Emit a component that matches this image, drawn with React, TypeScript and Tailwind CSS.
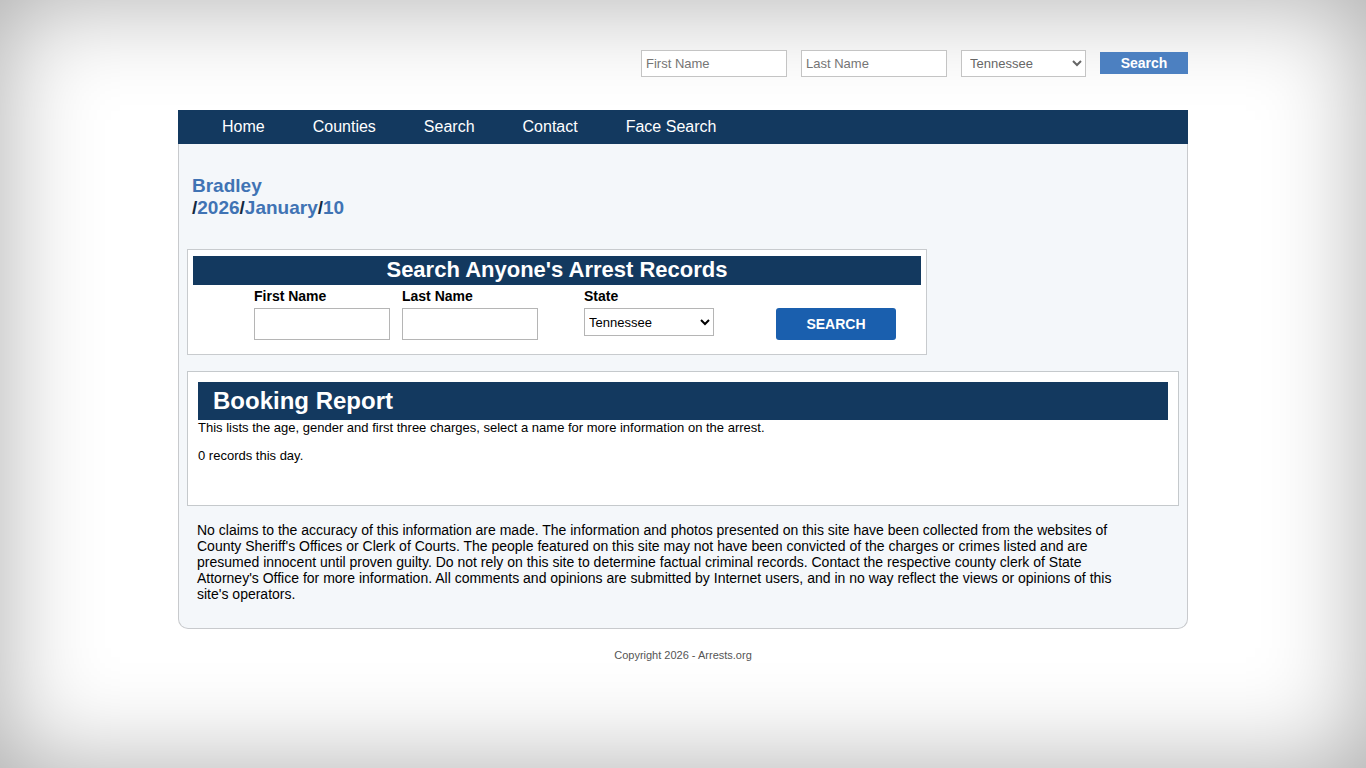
const states = ['Tennessee', 'Texas', 'Utah', 'Vermont', 'Virginia'];
const navItems = ['Home', 'Counties', 'Search', 'Contact', 'Face Search'];

function StateOptions() {
  return (
    <>
      {states.map((state) => (
        <option key={state}>{state}</option>
      ))}
    </>
  );
}

function TopSearch() {
  return (
    <form className="flex flex-wrap items-start justify-end gap-3.5 pt-[50px] text-[13px]" onSubmit={(e) => e.preventDefault()}>
      <input
        type="text"
        aria-label="First Name"
        placeholder="First Name"
        className="h-[27px] w-[146px] border border-[#c4c4c4] bg-white px-1 placeholder:text-[#757575]"
      />
      <input
        type="text"
        aria-label="Last Name"
        placeholder="Last Name"
        className="h-[27px] w-[146px] border border-[#c4c4c4] bg-white px-1 placeholder:text-[#757575]"
      />
      <select aria-label="State" className="h-[27px] w-[125px] border border-[#c4c4c4] bg-white px-1 text-[#666]">
        <StateOptions />
      </select>
      <button type="submit" className="mt-0.5 h-[22px] w-[88px] bg-[#4c80c1] text-sm leading-[22px] font-bold text-white">
        Search
      </button>
    </form>
  );
}

function RecordSearch() {
  return (
    <section className="mt-[30px] max-w-[740px] border border-[#c8cbce] bg-white px-[5px] pt-1.5 pb-3.5">
      <h2 className="bg-[#13395f] pb-0.5 text-center text-[22px] leading-[27px] font-bold text-white">
        Search Anyone's Arrest Records
      </h2>
      <form className="flex items-start pr-[25px] pl-[61px] text-[13px]" onSubmit={(e) => e.preventDefault()}>
        <div className="flex flex-col">
          <label htmlFor="first-name" className="text-sm leading-[23px] font-bold">
            First Name
          </label>
          <input id="first-name" type="text" className="h-8 w-[136px] border border-[#b5b5b5] bg-white px-1" />
        </div>
        <div className="ml-3 flex flex-col">
          <label htmlFor="last-name" className="text-sm leading-[23px] font-bold">
            Last Name
          </label>
          <input id="last-name" type="text" className="h-8 w-[136px] border border-[#b5b5b5] bg-white px-1" />
        </div>
        <div className="ml-[46px] flex flex-col">
          <label htmlFor="state" className="text-sm leading-[23px] font-bold">
            State
          </label>
          <select id="state" className="h-7 w-[130px] border border-[#b5b5b5] bg-white">
            <StateOptions />
          </select>
        </div>
        <button
          type="submit"
          className="mt-[23px] ml-auto h-8 w-[120px] rounded-[3px] bg-[#1a5fae] text-sm font-bold text-white"
        >
          SEARCH
        </button>
      </form>
    </section>
  );
}

export default function App() {
  return (
    <div className="min-h-screen bg-white px-4 font-['Liberation_Sans',Arial,sans-serif] text-black shadow-[inset_0_0_100px_rgba(0,0,0,0.33)]">
      <div className="mx-auto max-w-[1010px]">
        <header>
          <TopSearch />
          <nav className="mt-[33px] flex min-h-[34px] flex-wrap items-center gap-x-12 bg-[#13395f] px-11 text-base text-white">
            {navItems.map((item) => (
              <a key={item} href="#" className="leading-8">
                {item}
              </a>
            ))}
          </nav>
        </header>
        <main className="rounded-b-[10px] border border-t-0 border-[#c8cacd] bg-[#f4f7fa] px-2 pb-[26px]">
          <h1 className="pt-[31px] pl-[5px] text-[19px] leading-[22px] font-bold text-[#13293f]">
            <a href="#" className="text-[#4073b4]">Bradley</a>
            <br />/<a href="#" className="text-[#4073b4]">2026</a>/<a href="#" className="text-[#4073b4]">January</a>/<a href="#" className="text-[#4073b4]">10</a>
          </h1>
          <RecordSearch />
          <section className="mt-4 min-h-[135px] border border-[#c5c9cc] bg-white p-2.5 text-[13px] leading-4">
            <h2 className="bg-[#13395f] px-[15px] text-2xl leading-[38px] font-bold text-white">Booking Report</h2>
            <p>This lists the age, gender and first three charges, select a name for more information on the arrest.</p>
            <p className="mt-3">0 records this day.</p>
          </section>
          <p className="mt-4 pr-12 pl-2.5 text-sm leading-4">
            No claims to the accuracy of this information are made. The information and photos presented on this site have
            been collected from the websites of County Sheriff's Offices or Clerk of Courts. The people featured on this site
            may not have been convicted of the charges or crimes listed and are presumed innocent until proven guilty. Do not
            rely on this site to determine factual criminal records. Contact the respective county clerk of State Attorney's
            Office for more information. All comments and opinions are submitted by Internet users, and in no way reflect the
            views or opinions of this site's operators.
          </p>
        </main>
        <footer className="pt-5 text-center text-[11px] leading-[13px] text-[#555]">Copyright 2026 - Arrests.org</footer>
      </div>
    </div>
  );
}
